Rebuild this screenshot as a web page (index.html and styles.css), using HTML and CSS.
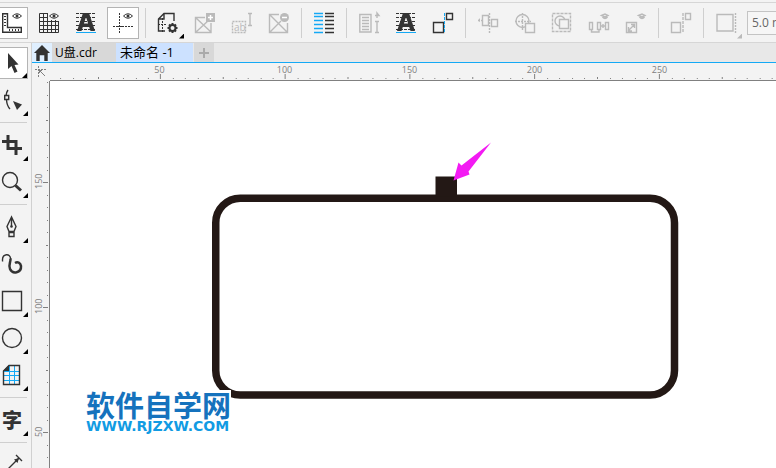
FILE: index.html
```html
<!DOCTYPE html>
<html lang="zh-CN">
<head>
<meta charset="utf-8">
<title>未命名 -1</title>
<link rel="stylesheet" href="styles.css">
</head>
<body>
<div class="app">
  <header class="toolbar">
    <button class="tool active" aria-label="Rulers"><svg viewBox="0 0 20 20" class="icon"><path d="M.7 .7V19.300H19.300V14.500H5.500V.7Z" class="s1 mid"/><path d="M2 3.500h2M2 6.500h2M2 9.500h2M2 12.500h2M7.500 16v2M10.500 16v2M13.500 16v2M16.500 16v2" class="s1"/><path d="M10.500 3Q15 -1.500 19.500 3Q15 7.500 10.500 3Z" class="s1"/><circle cx="15" cy="3" r="1.500" class="f"/></svg></button>
    <button class="tool" aria-label="Grid"><svg viewBox="0 0 20 20" class="icon"><path d="M8 .5H.5V19.500H19.500V8M4.500 0V20M8.500 0V20M12.500 7V20M16.500 7V20M0 4.500H9M0 8.500H20M0 12.500H20M0 16.500H20" class="s1"/><path d="M10.500 3Q15 -1.500 19.500 3Q15 7.500 10.500 3Z" class="s1"/><circle cx="15" cy="3" r="1.500" class="f"/></svg></button>
    <button class="tool" aria-label="Baseline grid"><svg viewBox="0 0 20 20" class="icon"><path d="M0 .5H20M0 4.500H20M0 8.500H20M0 12.500H20M0 16.500H20" class="s1 dash"/><path d="M7 0H13L19 18H14.500L13.200 14H6.800L5.500 18H1ZM10 4L7.900 10.500H12.100Z" class="f" fill-rule="evenodd"/><path d="M0 19.500H20" class="blue"/></svg></button>
    <button class="tool active" aria-label="Guidelines"><svg viewBox="0 0 20 20" class="icon"><path d="M6.500 0V20M0 13.500H20" class="s1 dots"/><path d="M3 13.500H10" class="s1"/><path d="M10.500 3Q15 -1.500 19.500 3Q15 7.500 10.500 3Z" class="s1"/><circle cx="15" cy="3" r="1.500" class="f"/></svg></button>
    <span class="rule"></span>
    <button class="tool" aria-label="Page options"><svg viewBox="0 0 20 20" class="icon"><path d="M16 8V.5H6L.5 6V18H7M6 0V6H0" class="s1 mid"/><path d="M4.500 5V20M0 11.500H9" class="s1 dots"/><circle cx="14.500" cy="15" r="3" class="s2"/><path d="M14.500 10V12M14.500 18V20M9.500 15H12M17 15H19.500M11 11.500L12.500 13M18 11.500L16.500 13M11 18.500L12.500 17M18 18.500L16.500 17" class="s2"/></svg><i class="flyout"></i></button>
    <button class="tool" disabled aria-label="Add frame"><svg viewBox="0 0 20 20" class="icon"><path d="M10 4.500H.5V19.500H16V10M1 5L16 19M1 19L14 7" class="s1"/><path d="M11 0H20V9H11Z" class="f"/><path d="M15.500 2V7M13 4.500H18" class="white"/></svg></button>
    <button class="tool" disabled aria-label="Text frame"><svg viewBox="0 0 20 20" class="icon"><path d="M.5 8.500H13.500V19.500H.5Z" class="s1 dots"/><path d="M16 .5H20M18 0V12M16 12.500H20" class="s1"/><text x="2" y="18" class="small-text">ab</text></svg></button>
    <button class="tool" disabled aria-label="Remove frame"><svg viewBox="0 0 20 20" class="icon"><path d="M10 1.500H.5V19.500H18.500V10M1 2L18 19M1 19L12 8" class="s1"/><circle cx="15.500" cy="4.500" r="4.500" class="f"/><path d="M13 4.500H18" class="white"/></svg></button>
    <span class="rule"></span>
    <button class="tool" aria-label="Columns"><svg viewBox="0 0 20 20" class="icon"><path d="M0 .5H9M0 3.500H9M0 7.500H9M0 11.500H9M0 15.500H9M0 19.500H9" class="blue thick"/><path d="M11 .5H20M11 3.500H20M11 7.500H20M11 11.500H20M11 15.500H20M11 19.500H20" class="s1 thick"/></svg></button>
    <span class="rule"></span>
    <button class="tool" disabled aria-label="Text flow"><svg viewBox="0 0 20 20" class="icon"><path d="M.8 1.500H12V19H.8Z" class="s1 mid"/><path d="M3 4.500H10M3 7.500H10M3 10.500H10M3 13.500H10M3 16.500H10M16 8.500H20M18 8V19M16 19.500H20" class="s1"/><path d="M16 2.500H20L18 0V5" class="s1"/></svg></button>
    <button class="tool" aria-label="Snap to baseline"><svg viewBox="0 0 20 20" class="icon"><path d="M0 .5H20M0 4.500H20M0 8.500H20M0 12.500H20M0 16.500H20" class="s1 dash"/><path d="M7 0H13L19 18H14.500L13.200 14H6.800L5.500 18H1ZM10 4L7.900 10.500H12.100Z" class="f" fill-rule="evenodd"/><path d="M0 19.500H20" class="blue"/></svg></button>
    <button class="tool" aria-label="Alignment guides"><svg viewBox="0 0 20 20" class="icon"><path d="M.5 9.500H10.500V19.500H.5ZM13.500 .5H19.500V6.500H13.500Z" class="s1 mid"/><path d="M11.500 0V20" class="blue dash"/></svg></button>
    <span class="rule"></span>
    <button class="tool" disabled aria-label="Align centers"><svg viewBox="0 0 20 20" class="icon"><path d="M4.500 2.500H10.500V12.500H4.500ZM13.500 6.500H19.500V13.500H13.500Z" class="s1"/><path d="M11.500 0V20M0 7.500H4" class="s1 dots"/><path d="M2 5L0 7.500L2 9Z" class="f"/></svg></button>
    <button class="tool" disabled aria-label="Snap to center"><svg viewBox="0 0 20 20" class="icon"><circle cx="7.500" cy="8" r="6.500" class="s1"/><path d="M7.500 0V17M0 8.500H16" class="s1 dots"/><path d="M10.500 10.500H19.500V19.500H10.500Z" class="s1 gap"/></svg></button>
    <button class="tool" disabled aria-label="Snap to bounds"><svg viewBox="0 0 20 20" class="icon"><path d="M.5 .5H18.500V18.500H.5Z" class="s1 dash"/><circle cx="8" cy="8" r="5" class="s1"/><path d="M7.500 6.500H16.500V15.500H7.500Z" class="s1 gap"/></svg></button>
    <button class="tool" disabled aria-label="Distribute spacing"><svg viewBox="0 0 20 20" class="icon"><path d="M.5 9.500H3.500V16.500H.5ZM8.500 9.500H11.500V16.500H8.500ZM16.500 9.500H19.500V16.500H16.500ZM2.500 17V19H6M10 17V19H6M12 13H16M14 11V15M12.500 2.500L16 1L19 2.500L16 4ZM13.500 4Q16 7 18.500 4" class="s1"/></svg></button>
    <button class="tool" disabled aria-label="Dimension guides"><svg viewBox="0 0 20 20" class="icon"><path d="M.5 9.500H10.500V19.500H.5ZM2 18L9 11M5 11.500H8.500V15M2.500 14V18H6M12.500 2.500L16 1L19 2.500L16 4ZM13.500 4Q16 7 18.500 4" class="s1"/></svg></button>
    <span class="rule"></span>
    <button class="tool" disabled aria-label="Edge guides"><svg viewBox="0 0 20 20" class="icon"><path d="M.5 9.500H9.500V19.500H.5ZM14.500 .5H19.500V6.500H14.500Z" class="s1"/><path d="M12 0V20" class="s1 dash"/></svg></button>
    <span class="rule"></span>
    <button class="tool" disabled aria-label="Margin guides"><svg viewBox="0 0 20 20" class="icon"><path d="M1 1.500H17V18H1Z" class="s1 mid"/><path d="M19.500 0V20" class="s1 dots"/></svg><i class="flyout"></i></button>
    <input class="distance" type="text" value="5.0 mm" aria-label="Margin distance">
  </header>

  <div class="workspace">
    <nav class="toolbox" aria-label="Tools">
      <button class="tool active" aria-label="Pick"><svg viewBox="0 0 20 20" class="icon"><path d="M6 0V16L9.500 13L12.500 20L15.500 18.500L12.500 12L16.500 11.500Z" class="f"/></svg><i class="flyout"></i></button>
      <button class="tool" aria-label="Shape"><svg viewBox="0 0 20 20" class="icon"><path d="M6 0Q4 3 4.200 5M4.500 10Q5 16 8 19" class="s1 mid"/><path d="M2.700 5.500H6.700V9.500H2.700Z" class="s1 mid"/><path d="M11 11L20 14.500L15 20Z" class="f"/></svg><i class="flyout"></i></button>
      <span class="rule"></span>
      <button class="tool" aria-label="Crop"><svg viewBox="0 0 20 20" class="icon"><path d="M0 6.500H14V20M6 0V13.500H20" class="s3"/></svg><i class="flyout"></i></button>
      <button class="tool" aria-label="Zoom"><svg viewBox="0 0 20 20" class="icon"><circle cx="8" cy="8" r="7.500" class="s1 mid"/><path d="M13.500 13.500L19 18.500" class="s3"/></svg><i class="flyout"></i></button>
      <span class="rule"></span>
      <button class="tool" aria-label="Pen"><svg viewBox="0 0 20 20" class="icon"><path d="M9.500 0L5 9.500L7 14.500H12L14 9.500ZM9.500 1V9M7 15.500H12V19.500H7Z" class="s1 mid"/><circle cx="9.500" cy="9.500" r="1.300" class="f"/></svg><i class="flyout"></i></button>
      <button class="tool" aria-label="Artistic media"><svg viewBox="0 0 20 20" class="icon"><path d="M.6 7.500C-.5 -1 9 -1 8.500 5" class="s1 mid"/><path d="M8.500 4.500C9 8 6 11 8 15C10.500 20.500 19.500 19 19 12C18.500 8.500 15.500 7.500 13 9" class="s2 stroke"/></svg></button>
      <button class="tool" aria-label="Rectangle"><svg viewBox="0 0 20 20" class="icon"><path d="M.5 .5H19.500V19.500H.5Z" class="s1 mid"/></svg><i class="flyout"></i></button>
      <button class="tool" aria-label="Ellipse"><svg viewBox="0 0 20 20" class="icon"><circle cx="10" cy="10" r="9.500" class="s1 mid"/></svg><i class="flyout"></i></button>
      <button class="tool" aria-label="Table"><svg viewBox="0 0 20 20" class="icon"><path d="M7.500 1V19M12.500 1V19M2 6.500H17M2 10.500H17M2 15.500H17" class="blue"/><path d="M7 .5H17.500V19.500H1.500V6Z" class="s1 mid"/><path d="M7 0V6H1Z" class="f"/></svg><i class="flyout"></i></button>
      <span class="rule"></span>
      <button class="tool" aria-label="Text"><span class="glyph">字</span><i class="flyout"></i></button>
      <span class="rule"></span>
      <button class="tool" aria-label="Dimension"><svg viewBox="0 0 20 20" class="icon"><path d="M2 18L17 3M14 0L20 6M0 15L5 20" class="s1 mid"/><path d="M17 3L15.500 8L12 4.500Z" class="f"/></svg></button>
    </nav>

    <main class="document">
      <div class="tabs">
        <button class="tab home" aria-label="Home"><svg viewBox="0 0 14 14" class="home-icon"><path d="M7 0L14 7H12V14H9V9H5V14H2V7H0Z" class="f"/></svg></button>
        <button class="tab file">U盘.cdr</button>
        <button class="tab current">未命名 -1</button>
        <button class="tab add" aria-label="New document"><svg viewBox="0 0 12 12" class="add-icon"><path d="M6 1V11M1 6H11" class="plus"/></svg></button>
      </div>
      <div class="sheet">
        <div class="origin"><svg viewBox="0 0 12 12" class="origin-icon"><path d="M3.500 0V12M0 3.500H12" class="ticks dots"/><path d="M4 4L10 10M4 4V7M4 4H7" class="ticks"/></svg></div>
        <div class="ruler-x">
          <svg class="scale" aria-hidden="true"><defs><pattern id="px" width="124.750" height="5" x="48" patternUnits="userSpaceOnUse"><path d="M.5 3v2M13 4v1M25.500 4v1M38 4v1M50.500 4v1M62.500 0v5M75 4v1M87.500 4v1M100 4v1M112.500 4v1" class="ticks"/></pattern></defs><rect width="100%" height="5" fill="url(#px)"/></svg>
          <span>50</span><span>100</span><span>150</span><span>200</span><span>250</span>
        </div>
        <div class="ruler-y">
          <svg class="scale" aria-hidden="true"><defs><pattern id="py" width="5" height="125" y="39" patternUnits="userSpaceOnUse"><path d="M4 12.500h1M4 25.500h1M4 37.500h1M4 50.500h1M0 62.500h5M4 75.500h1M4 87.500h1M4 100.500h1M4 112.500h1M3 .5h2" class="ticks"/></pattern></defs><rect width="5" height="100%" fill="url(#py)"/></svg>
          <span>150</span><span>100</span><span>50</span>
        </div>
        <div class="canvas">
          <svg class="drawing" role="img" aria-label="Rounded rectangle with a small block">
            <rect x="165.750" y="117.250" width="458.750" height="196.750" rx="24.500" class="outline"/>
            <rect x="385.500" y="95.500" width="21.500" height="20" class="block"/>
            <path d="M441 61.500L418.500 90.500L419.500 93.500L403.500 99.500L408.500 81.500L411.500 84.500Z" class="arrow"/>
          </svg>
          <div class="watermark"><strong>软件自学网</strong><span>WWW.RJZXW.COM</span></div>
        </div>
      </div>
    </main>
  </div>
</div>
</body>
</html>
```
FILE: styles.css
```css
* { box-sizing: border-box; }
body { margin: 0; font-family: "Open Sans", "Noto Sans CJK SC", sans-serif; }
button { font: inherit; padding: 0; border: 0; background: none; }

.app { display: flex; flex-direction: column; height: 100vh; overflow: hidden; background: #f3f3f3; color: #333; }

.toolbar { display: flex; align-items: center; gap: 5px; flex: none; height: 43px; margin-left: -4px; padding-top: 3px; background: #f3f3f3; border-bottom: 1px solid #d6d6d6; box-shadow: inset 0 2px #f3f3f3, inset 0 3px #d6d6d6; overflow: hidden; }
.toolbar .rule { flex: none; width: 1px; height: 30px; margin: 0 1px; background: #cfcfcf; }

.tool { position: relative; display: flex; align-items: center; justify-content: center; flex: none; width: 32px; height: 32px; color: #333; }
.tool.active { background: #fff; border: 1px solid #b4b4b4; }
.tool:disabled { color: #bababa; }
.icon { width: 20px; height: 20px; overflow: visible; }
.glyph { font: 900 20px/20px "Noto Sans CJK SC", sans-serif; }
.flyout { position: absolute; right: 0; bottom: 0; width: 5px; height: 5px; background: #000; clip-path: polygon(100% 0, 100% 100%, 0 100%); }
.tool:disabled .flyout { background: #bababa; }

.s1, .s2, .s3, .blue, .white, .ticks, .plus { fill: none; stroke: currentColor; stroke-width: 1; }
.tool:disabled .s1 { stroke-width: 1.4; }
.s2 { stroke-width: 2; }
.stroke { stroke-width: 2.5; }
.s3 { stroke-width: 3; }
.mid { stroke-width: 1.4; }
.blue { stroke: #14a9f5; }
.thick { stroke-width: 1.6; }
.white { stroke: #fff; stroke-width: 1.5; }
.f { fill: currentColor; }
.dash { stroke-dasharray: 3 1; }
.dots { stroke-dasharray: 2 1; }
.gap { fill: #f3f3f3; }
.small-text { font: 10px "Open Sans", sans-serif; fill: currentColor; }

.distance { flex: none; width: 60px; height: 24px; padding: 0 4px; border: 1px solid #c4c4c4; background: #f6f6f6; color: #666; font: 12px "Open Sans", sans-serif; }

.workspace { display: flex; flex: 1; min-height: 0; }
.toolbox { display: flex; flex-direction: column; gap: 5px; flex: none; width: 32px; padding-top: 4px; border-right: 1px solid #d0d0d0; overflow: hidden; }
.toolbox .tool { margin-left: -4px; }
.toolbox .rule { flex: none; width: 27px; height: 1px; margin: 1px 0; background: #cfcfcf; }

.document { display: flex; flex-direction: column; flex: 1; min-width: 0; }
.tabs { display: flex; flex: none; height: 20px; background: #e8e8e8; border-bottom: 1px solid #14a9f5; }
.tab { display: flex; align-items: center; height: 19px; font-size: 12px; line-height: 18px; color: #000; white-space: nowrap; }
.home { width: 20px; justify-content: center; background: #dfefff; color: #333; }
.home-icon { width: 16px; height: 16px; }
.file { width: 64px; padding-left: 3px; background: #d8d8d8; }
.current { width: 77px; padding: 0 0 2px 4px; background: #cce1ff; font-size: 13px; }
.add { width: 20px; margin-left: 1px; justify-content: center; background: #d8d8d8; color: #aaa; }
.add-icon { width: 12px; height: 12px; }
.plus { stroke-width: 2; }

.sheet { display: grid; grid-template: 18px 1fr / 18px 1fr; flex: 1; min-height: 0; }
.origin { display: flex; align-items: center; justify-content: center; color: #777; }
.origin-icon { width: 12px; height: 12px; }
.ruler-x, .ruler-y { position: relative; display: flex; overflow: hidden; color: #808080; font-size: 9px; line-height: 14px; text-align: center; }
.ruler-x { padding-left: 47px; border-bottom: 1px solid #808080; }
.ruler-x span { flex: none; width: 125px; }
.ruler-y { flex-direction: column; padding-top: 38px; border-right: 1px solid #808080; }
.ruler-y span { flex: none; width: 16px; height: 125px; writing-mode: vertical-rl; transform: rotate(180deg); }
.scale { position: absolute; }
.ruler-x .scale { left: 0; bottom: 1px; width: 100%; height: 5px; }
.ruler-y .scale { top: 0; right: 1px; width: 5px; height: 100%; }
.ticks { shape-rendering: crispEdges; stroke: #808080; }

.canvas { position: relative; background: #fff; overflow: hidden; }
.drawing { display: block; width: 100%; height: 100%; }
.outline { fill: none; stroke: #231815; stroke-width: 7.5; }
.block { fill: #231815; }
.arrow { fill: #f31af3; }
.watermark { position: absolute; left: 34px; top: 309px; display: flex; flex-direction: column; width: 147px; padding-left: 2px; background: #fff; white-space: nowrap; }
.watermark strong { color: #1572bd; font: bold 29px/28px "Noto Sans CJK SC", sans-serif; }
.watermark span { color: #119be3; font: bold 14px/16px "DejaVu Sans", sans-serif; }
```
